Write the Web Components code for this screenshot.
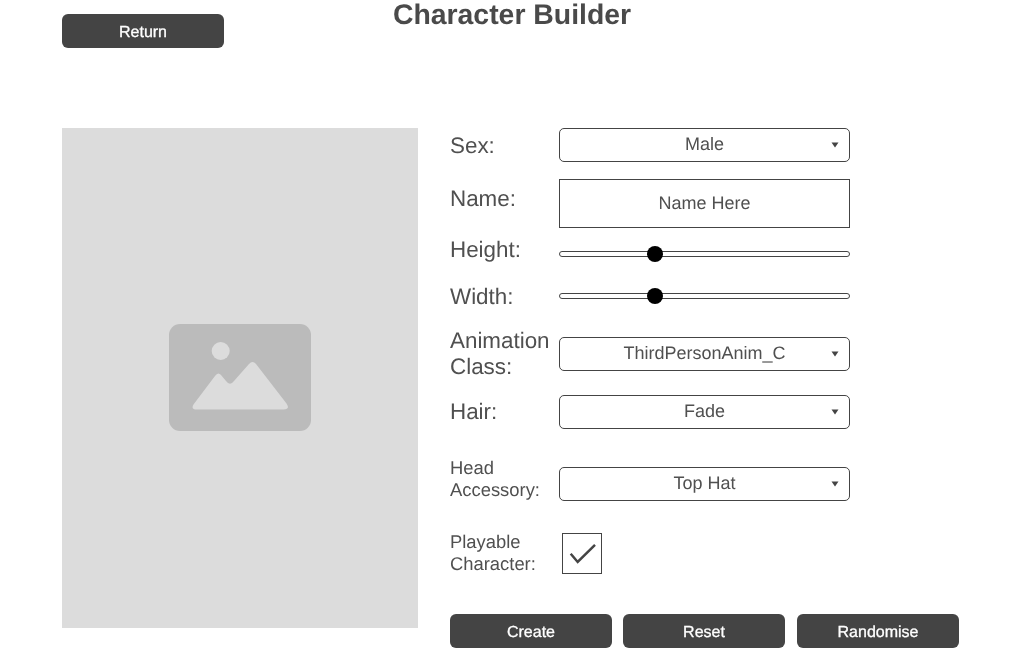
<!DOCTYPE html>
<html>
<head>
<meta charset="utf-8">
<title>Character Builder</title>
<style>
  html, body { margin: 0; background: #fff; }
  body { font-family: "Liberation Sans", Arial, sans-serif; color: #464646; text-rendering: geometricPrecision; }
</style>
</head>
<body>
<builder-page>
  <app-button slot="back">Return</app-button>
  <span slot="title">Character Builder</span>
  <image-placeholder slot="preview"></image-placeholder>

  <form-row slot="form" style="margin-top:0;height:34px;--label-top:2px"><span slot="label">Sex:</span><select-box>Male</select-box></form-row>
  <form-row slot="form" style="margin-top:17px;height:49px;--label-pad:10px"><span slot="label">Name:</span><text-box>Name Here</text-box></form-row>
  <form-row slot="form" style="margin-top:10px;height:32px;--label-pad:8px"><span slot="label">Height:</span><range-slider value="33"></range-slider></form-row>
  <form-row slot="form" style="margin-top:10px;height:32px;--label-top:2px"><span slot="label">Width:</span><range-slider value="33"></range-slider></form-row>
  <form-row slot="form" style="margin-top:25px;height:34px"><span slot="label">Animation Class:</span><select-box>ThirdPersonAnim_C</select-box></form-row>
  <form-row slot="form" style="margin-top:24px;height:34px"><span slot="label">Hair:</span><select-box>Fade</select-box></form-row>
  <form-row slot="form" size="small" style="margin-top:38px;height:34px;--label-pad:11px"><span slot="label">Head Accessory:</span><select-box>Top Hat</select-box></form-row>
  <form-row slot="form" size="small" style="margin-top:32px;height:41px;--label-pad:2px"><span slot="label">Playable Character:</span><check-box checked></check-box></form-row>

  <app-button slot="actions">Create</app-button>
  <app-button slot="actions">Reset</app-button>
  <app-button slot="actions">Randomise</app-button>
</builder-page>

<script>
class BuilderPage extends HTMLElement {
  constructor() {
    super();
    this.attachShadow({mode: 'open'}).innerHTML = `
      <style>
        :host { display: block; width: 1016px; height: 658px; overflow: hidden; box-sizing: border-box; padding: 0 0 0 62px; }
        header { display: flex; height: 128px; box-sizing: border-box; position: relative; padding-top: 14px; }
        h1 {
          position: absolute; left: -62px; width: 1024px; top: 0; margin: 0; text-align: center;
          font-size: 28.4px; line-height: 31px; font-weight: bold; color: #4a4a4a;
        }
        .main { display: flex; gap: 32px; align-items: flex-start; }
        .right { display: flex; flex-direction: column; width: 509px; }
        .form { display: flex; flex-direction: column; }
        .actions { display: grid; grid-template-columns: 173px 174px 162px; margin-top: 40px; }
      </style>
      <header><slot name="back"></slot><h1><slot name="title"></slot></h1></header>
      <div class="main">
        <slot name="preview"></slot>
        <div class="right">
          <div class="form"><slot name="form"></slot></div>
          <div class="actions"><slot name="actions"></slot></div>
        </div>
      </div>`;
  }
}

class AppButton extends HTMLElement {
  constructor() {
    super();
    this.attachShadow({mode: 'open'}).innerHTML = `
      <style>
        :host {
          display: flex; align-items: center; justify-content: center; width: 162px; height: 34px;
          box-sizing: border-box; padding-top: 3px;
          background: #444; border-radius: 6px; color: #fff; font-size: 16px;
          -webkit-text-stroke: 0.3px #fff; cursor: pointer; will-change: transform;
        }
      </style>
      <slot></slot>`;
  }
}

class ImagePlaceholder extends HTMLElement {
  constructor() {
    super();
    this.attachShadow({mode: 'open'}).innerHTML = `
      <style>
        :host { display: flex; align-items: center; justify-content: center; box-sizing: border-box; padding-bottom: 1px; width: 356px; height: 500px; background: #dcdcdc; }
        svg { display: block; }
      </style>
      <svg width="142" height="107" viewBox="0 0 142 107">
        <rect width="142" height="107" rx="11" fill="#bbb"/>
        <circle cx="51.700" cy="27" r="9" fill="#dcdcdc"/>
        <path d="M28 85.500Q21.500 85.500 24.500 80.500L46 52Q49 47.500 52 51L57 57Q61 62.500 65 57L80 40Q83.500 36 87 40L117.500 79.500Q121.500 85.500 114.500 85.500Z" fill="#dcdcdc"/>
      </svg>`;
  }
}

class FormRow extends HTMLElement {
  constructor() {
    super();
    this.attachShadow({mode: 'open'}).innerHTML = `
      <style>
        :host { display: flex; align-items: center; width: 400px; flex: none; }
        .label {
          width: 109px; flex: none; box-sizing: border-box; white-space: normal;
          padding-top: var(--label-top, 0); padding-bottom: var(--label-pad, 0);
          font-size: 22.4px; line-height: 26px; color: #505050; will-change: transform;
        }
        :host([size="small"]) .label { font-size: 18.4px; line-height: 22px; }
        .control { width: 291px; flex: none; }
      </style>
      <div class="label"><slot name="label"></slot></div>
      <div class="control"><slot></slot></div>`;
  }
}

class SelectBox extends HTMLElement {
  constructor() {
    super();
    this.attachShadow({mode: 'open'}).innerHTML = `
      <style>
        :host {
          display: flex; align-items: center; justify-content: center; position: relative;
          box-sizing: border-box; height: 34px; border: 1px solid #444; border-radius: 5px;
          font-size: 18px; color: #505050; padding-bottom: 2px; background: #fff; will-change: transform;
        }
        svg { position: absolute; right: 10px; top: 13px; }
      </style>
      <slot></slot>
      <svg width="8" height="6" viewBox="0 0 8 6"><path d="M0.500 0.500H7.500L4 5.500Z" fill="#444"/></svg>`;
  }
}

class TextBox extends HTMLElement {
  constructor() {
    super();
    this.attachShadow({mode: 'open'}).innerHTML = `
      <style>
        :host {
          display: flex; align-items: center; justify-content: center; box-sizing: border-box;
          height: 49px; border: 1px solid #444; font-size: 18px; color: #505050; background: #fff; will-change: transform;
        }
      </style>
      <slot></slot>`;
  }
}

class RangeSlider extends HTMLElement {
  constructor() {
    super();
    this.attachShadow({mode: 'open'}).innerHTML = `
      <style>
        :host { display: flex; align-items: center; height: 16px; position: relative; }
        .track { flex: 1; height: 6px; box-sizing: border-box; border: 1px solid #444; border-radius: 3px; background: #fff; }
        .thumb { position: absolute; top: 0; width: 16px; height: 16px; margin-left: -8px; border-radius: 50%; background: #000; }
      </style>
      <div class="track"></div>
      <div class="thumb"></div>`;
  }
  connectedCallback() {
    this.shadowRoot.querySelector('.thumb').style.left = this.getAttribute('value') + '%';
  }
}

class CheckBox extends HTMLElement {
  constructor() {
    super();
    this.attachShadow({mode: 'open'}).innerHTML = `
      <style>
        :host { display: flex; align-items: center; justify-content: center; box-sizing: border-box; width: 40px; height: 41px; margin-left: 3px; border: 1px solid #444; background: #fff; }
        svg { display: block; }
      </style>
      <svg width="28" height="24" viewBox="0 0 28 24"><path d="M2.700 11.800L9.700 20L27 2.800" fill="none" stroke="#444" stroke-width="2.500"/></svg>`;
  }
}

customElements.define('builder-page', BuilderPage);
customElements.define('app-button', AppButton);
customElements.define('image-placeholder', ImagePlaceholder);
customElements.define('form-row', FormRow);
customElements.define('select-box', SelectBox);
customElements.define('text-box', TextBox);
customElements.define('range-slider', RangeSlider);
customElements.define('check-box', CheckBox);
</script>
</body>
</html>
